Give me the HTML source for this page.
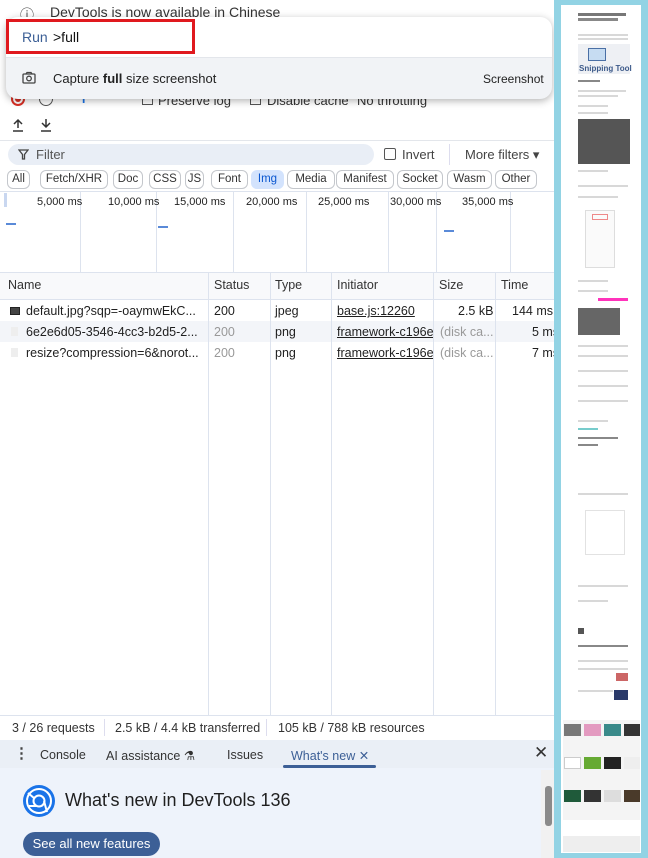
<!DOCTYPE html>
<html><head><meta charset="utf-8"><style>
*{box-sizing:border-box;margin:0;padding:0}
body{width:648px;height:858px;overflow:hidden;background:#fff;font-family:"Liberation Sans","Noto Sans CJK TC",sans-serif;font-size:12px;color:#1f1f1f;position:relative}
.a{position:absolute}
.chip{position:absolute;top:170px;height:19px;border:1px solid #c4c7cc;border-radius:6px;font-size:11.5px;line-height:17px;text-align:center;color:#333}
.vl{position:absolute;width:1px;background:#dde3ee}
.hd{position:absolute;top:278px;font-size:12.5px;color:#333}
.c{position:absolute;font-size:12.5px;white-space:nowrap}
.g{background:#d8d8d8;position:absolute;height:2px}
</style></head><body>
<div class="a" style="left:20px;top:5px;font-size:14px;color:#444">ⓘ</div>
<div class="a" style="left:50px;top:4px;font-size:14px;color:#333">DevTools is now available in Chinese</div>
<div class="a" style="left:11px;top:92px;width:14px;height:14px;border:2px solid #d93025;border-radius:50%"><div style="margin:2px;width:6px;height:6px;background:#d93025;border-radius:50%"></div></div>
<div class="a" style="left:39px;top:92px;width:14px;height:14px;border:1.5px solid #555;border-radius:50%"></div>
<div class="a" style="left:80px;top:92px;color:#1a73e8;font-weight:bold">T</div>
<div class="a" style="left:142px;top:94px;width:11px;height:11px;border:1px solid #555"></div>
<div class="a" style="left:158px;top:93px;font-size:13px;color:#333">Preserve log</div>
<div class="a" style="left:250px;top:94px;width:11px;height:11px;border:1px solid #555"></div>
<div class="a" style="left:267px;top:93px;font-size:13px;color:#333">Disable cache</div>
<div class="a" style="left:357px;top:93px;font-size:13px;color:#333">No throttling</div>
<svg class="a" style="left:12px;top:118px" width="12" height="14" viewBox="0 0 12 14"><path d="M6 10V2M2 6L6 2L10 6M1 13H11" fill="none" stroke="#333" stroke-width="1.5"/></svg>
<svg class="a" style="left:40px;top:118px" width="12" height="14" viewBox="0 0 12 14"><path d="M6 1V9M2 5L6 9L10 5M1 13H11" fill="none" stroke="#333" stroke-width="1.5"/></svg>
<div class="a" style="left:0;top:140px;width:554px;height:1px;background:#e3e6eb"></div>
<div class="a" style="left:8px;top:144px;width:366px;height:21px;background:#e9eef6;border-radius:11px"></div>
<svg class="a" style="left:18px;top:149px" width="11" height="11" viewBox="0 0 11 11"><path d="M1 1H10L6.5 5.5V10H4.5V5.5Z" fill="none" stroke="#444" stroke-width="1.3"/></svg>
<div class="a" style="left:36px;top:147px;font-size:13px;color:#555">Filter</div>
<div class="a" style="left:384px;top:148px;width:12px;height:12px;border:1px solid #555;border-radius:2px"></div>
<div class="a" style="left:402px;top:147px;font-size:13px;color:#444">Invert</div>
<div class="a" style="left:449px;top:144px;width:1px;height:21px;background:#dde"></div>
<div class="a" style="left:465px;top:147px;font-size:13px;color:#444">More filters ▾</div>
<div class="chip" style="left:7px;width:23px">All</div>
<div class="chip" style="left:40px;width:68px">Fetch/XHR</div>
<div class="chip" style="left:113px;width:30px">Doc</div>
<div class="chip" style="left:149px;width:32px">CSS</div>
<div class="chip" style="left:185px;width:19px">JS</div>
<div class="chip" style="left:211px;width:37px">Font</div>
<div class="chip" style="left:251px;width:33px;background:#d3e3fd;border-color:#d3e3fd;color:#0b57d0">Img</div>
<div class="chip" style="left:287px;width:48px">Media</div>
<div class="chip" style="left:336px;width:58px">Manifest</div>
<div class="chip" style="left:397px;width:46px">Socket</div>
<div class="chip" style="left:447px;width:45px">Wasm</div>
<div class="chip" style="left:495px;width:42px">Other</div>
<div class="a" style="left:0;top:191px;width:554px;height:1px;background:#dde3ee"></div>
<div class="a" style="left:4px;top:193px;width:3px;height:14px;background:#c9d7f0"></div>
<div class="vl" style="left:80px;top:191px;height:81px"></div>
<div class="vl" style="left:156px;top:191px;height:81px"></div>
<div class="vl" style="left:233px;top:191px;height:81px"></div>
<div class="vl" style="left:306px;top:191px;height:81px"></div>
<div class="vl" style="left:388px;top:191px;height:81px"></div>
<div class="vl" style="left:436px;top:191px;height:81px"></div>
<div class="vl" style="left:510px;top:191px;height:81px"></div>
<div class="a" style="left:37px;top:196px;font-size:11px">5,000 ms</div>
<div class="a" style="left:108px;top:196px;font-size:11px">10,000 ms</div>
<div class="a" style="left:174px;top:196px;font-size:11px">15,000 ms</div>
<div class="a" style="left:246px;top:196px;font-size:11px">20,000 ms</div>
<div class="a" style="left:318px;top:196px;font-size:11px">25,000 ms</div>
<div class="a" style="left:390px;top:196px;font-size:11px">30,000 ms</div>
<div class="a" style="left:462px;top:196px;font-size:11px">35,000 ms</div>
<div class="a" style="left:6px;top:223px;width:10px;height:2px;background:#5a8ad8"></div>
<div class="a" style="left:158px;top:226px;width:10px;height:2px;background:#5a8ad8"></div>
<div class="a" style="left:444px;top:230px;width:10px;height:2px;background:#5a8ad8"></div>
<div class="a" style="left:0;top:272px;width:554px;height:28px;background:#f8f9fb;border-top:1px solid #dde3ee;border-bottom:1px solid #dde3ee"></div>
<div class="a" style="left:0;top:321px;width:554px;height:21px;background:#f3f5f9"></div>
<div class="vl" style="left:208px;top:272px;height:444px"></div>
<div class="vl" style="left:270px;top:272px;height:444px"></div>
<div class="vl" style="left:331px;top:272px;height:444px"></div>
<div class="vl" style="left:433px;top:272px;height:444px"></div>
<div class="vl" style="left:495px;top:272px;height:444px"></div>
<div class="hd" style="left:8px">Name</div><div class="hd" style="left:214px">Status</div><div class="hd" style="left:275px">Type</div><div class="hd" style="left:337px">Initiator</div><div class="hd" style="left:439px">Size</div><div class="hd" style="left:501px">Time</div>
<div class="a" style="left:10px;top:307px;width:10px;height:8px;background:#444;border:1px solid #222"></div>
<div class="c" style="left:26px;top:304px">default.jpg?sqp=-oaymwEkC...</div>
<div class="c" style="left:214px;top:304px">200</div><div class="c" style="left:275px;top:304px">jpeg</div>
<div class="c" style="left:337px;top:304px;text-decoration:underline">base.js:12260</div>
<div class="c" style="left:458px;top:304px">2.5 kB</div><div class="c" style="left:512px;top:304px">144 ms</div>
<div class="a" style="left:11px;top:327px;width:7px;height:9px;background:#eee"></div>
<div class="c" style="left:26px;top:325px">6e2e6d05-3546-4cc3-b2d5-2...</div>
<div class="c" style="left:214px;top:325px;color:#999">200</div><div class="c" style="left:275px;top:325px">png</div>
<div class="c" style="left:337px;top:325px;text-decoration:underline;width:96px;overflow:hidden">framework-c196e</div>
<div class="c" style="left:440px;top:325px;color:#999">(disk ca...</div><div class="c" style="left:532px;top:325px">5 ms</div>
<div class="a" style="left:11px;top:348px;width:7px;height:9px;background:#eee"></div>
<div class="c" style="left:26px;top:346px">resize?compression=6&amp;norot...</div>
<div class="c" style="left:214px;top:346px;color:#999">200</div><div class="c" style="left:275px;top:346px">png</div>
<div class="c" style="left:337px;top:346px;text-decoration:underline;width:96px;overflow:hidden">framework-c196e</div>
<div class="c" style="left:440px;top:346px;color:#999">(disk ca...</div><div class="c" style="left:532px;top:346px">7 ms</div>
<div class="a" style="left:0;top:715px;width:554px;height:1px;background:#dde3ee"></div>
<div class="a" style="left:0;top:716px;width:554px;height:24px;background:#fff"></div>
<div class="c" style="left:12px;top:721px;color:#333">3 / 26 requests</div>
<div class="a" style="left:104px;top:719px;width:1px;height:17px;background:#dde"></div>
<div class="c" style="left:115px;top:721px;color:#333">2.5 kB / 4.4 kB transferred</div>
<div class="a" style="left:266px;top:719px;width:1px;height:17px;background:#dde"></div>
<div class="c" style="left:278px;top:721px;color:#333">105 kB / 788 kB resources</div>
<div class="a" style="left:0;top:740px;width:554px;height:28px;background:#eaeff6"></div>
<div class="a" style="left:14px;top:744px;font-size:15px;color:#444;font-weight:bold">⋮</div>
<div class="c" style="left:40px;top:748px;color:#333">Console</div>
<div class="c" style="left:106px;top:748px;color:#333">AI assistance ⚗</div>
<div class="c" style="left:227px;top:748px;color:#333">Issues</div>
<div class="c" style="left:291px;top:748px;color:#3c5f96">What's new ✕</div>
<div class="a" style="left:283px;top:765px;width:93px;height:3px;background:#3c5f96;border-radius:2px"></div>
<div class="a" style="left:534px;top:743px;font-size:17px;color:#333">✕</div>
<div class="a" style="left:0;top:768px;width:554px;height:90px;background:#eef3fb"></div>
<div class="a" style="left:541px;top:770px;width:13px;height:88px;background:#f1f1f1"></div>
<div class="a" style="left:545px;top:786px;width:7px;height:40px;background:#8a8a8a;border-radius:3px"></div>
<svg class="a" style="left:22px;top:784px" width="34" height="34" viewBox="0 0 34 34"><circle cx="17" cy="17" r="16" fill="#1a73e8"/><circle cx="17" cy="17" r="12" fill="none" stroke="#fff" stroke-width="2"/><circle cx="17" cy="17" r="5.5" fill="none" stroke="#fff" stroke-width="2"/><path d="M12 14 L6 9 M22 17 L25 28 M15 22 L7 22" stroke="#fff" stroke-width="2"/></svg>
<div class="a" style="left:65px;top:790px;font-size:18px;color:#1f1f1f">What's new in DevTools 136</div>
<div class="a" style="left:23px;top:832px;width:137px;height:24px;background:#3c5f96;border-radius:12px;color:#fff;font-size:13px;line-height:24px;text-align:center">See all new features</div>
<div class="a" style="left:6px;top:17px;width:546px;height:82px;background:#f1f3f6;border-radius:12px;box-shadow:0 2px 8px rgba(0,0,0,.3);overflow:hidden">
 <div style="height:41px;background:#fff;border-bottom:1px solid #e3e6eb"></div>
</div>
<div class="a" style="left:6px;top:19px;width:189px;height:35px;border:3px solid #e0191e"></div>
<div class="a" style="left:22px;top:29px;font-size:14px;color:#3c5f96">Run</div>
<div class="a" style="left:53px;top:29px;font-size:14px;color:#111">&gt;full</div>
<svg class="a" style="left:22px;top:71px" width="14" height="14" viewBox="0 0 14 14"><rect x="1" y="3" width="12" height="9" rx="1" fill="none" stroke="#444" stroke-width="1.3"/><circle cx="7" cy="7.5" r="2.3" fill="none" stroke="#444" stroke-width="1.3"/><path d="M4 3 L5 1.5 H9 L10 3" fill="none" stroke="#444" stroke-width="1.3"/></svg>
<div class="a" style="left:53px;top:71px;font-size:13px;color:#222">Capture <b>full</b> size screenshot</div>
<div class="a" style="left:483px;top:72px;font-size:12px;color:#222">Screenshot</div>
<div class="a" style="left:554px;top:0;width:94px;height:858px;background:#92d3e4"></div>
<div class="a" style="left:561px;top:5px;width:80px;height:848px;background:#fff"></div>
<div class="a" style="left:578px;top:13px;width:48px;height:3px;background:#777"></div>
<div class="a" style="left:578px;top:18px;width:40px;height:3px;background:#888"></div>
<div class="g" style="left:578px;top:34px;width:50px"></div>
<div class="g" style="left:578px;top:38px;width:50px"></div>
<div class="a" style="left:578px;top:44px;width:52px;height:30px;background:#eef0f4"></div>
<div class="a" style="left:588px;top:48px;width:18px;height:13px;background:#c6dcf2;border:1px solid #4a6fa5"></div>
<div class="a" style="left:579px;top:64px;font-size:8px;font-weight:bold;color:#3d5a8a">Snipping Tool</div>
<div class="g" style="left:578px;top:80px;width:22px;background:#888"></div>
<div class="g" style="left:578px;top:90px;width:48px"></div>
<div class="g" style="left:578px;top:95px;width:40px"></div>
<div class="g" style="left:578px;top:105px;width:30px"></div>
<div class="g" style="left:578px;top:112px;width:30px"></div>
<div class="a" style="left:578px;top:119px;width:52px;height:45px;background:#555"></div>
<div class="g" style="left:578px;top:170px;width:30px"></div>
<div class="g" style="left:578px;top:185px;width:50px"></div>
<div class="g" style="left:578px;top:196px;width:40px"></div>
<div class="a" style="left:585px;top:210px;width:30px;height:58px;border:1px solid #ddd;background:#fafafa"></div>
<div class="a" style="left:592px;top:214px;width:16px;height:6px;border:1px solid #e88"></div>
<div class="g" style="left:578px;top:280px;width:30px"></div>
<div class="g" style="left:578px;top:290px;width:30px"></div>
<div class="a" style="left:598px;top:298px;width:30px;height:3px;background:#f3b"></div>
<div class="a" style="left:578px;top:308px;width:42px;height:27px;background:#666"></div>
<div class="g" style="left:578px;top:345px;width:50px"></div>
<div class="g" style="left:578px;top:355px;width:50px"></div>
<div class="g" style="left:578px;top:370px;width:50px"></div>
<div class="g" style="left:578px;top:385px;width:50px"></div>
<div class="g" style="left:578px;top:400px;width:50px"></div>
<div class="g" style="left:578px;top:420px;width:30px"></div>
<div class="g" style="left:578px;top:428px;width:20px;background:#7cc"></div>
<div class="g" style="left:578px;top:437px;width:40px;background:#888"></div>
<div class="g" style="left:578px;top:444px;width:20px;background:#888"></div>
<div class="g" style="left:578px;top:493px;width:50px"></div>
<div class="a" style="left:585px;top:510px;width:40px;height:45px;border:1px solid #e2e2e2"></div>
<div class="g" style="left:578px;top:585px;width:50px"></div>
<div class="g" style="left:578px;top:600px;width:30px"></div>
<div class="a" style="left:578px;top:628px;width:6px;height:6px;background:#555"></div>
<div class="g" style="left:578px;top:645px;width:50px;background:#888"></div>
<div class="g" style="left:578px;top:660px;width:50px"></div>
<div class="g" style="left:578px;top:668px;width:50px"></div>
<div class="a" style="left:616px;top:673px;width:12px;height:8px;background:#c66"></div>
<div class="g" style="left:578px;top:690px;width:35px"></div>
<div class="a" style="left:614px;top:690px;width:14px;height:10px;background:#2a3a6a"></div>
<div class="a" style="left:563px;top:720px;width:77px;height:100px;background:#f4f4f4"></div>
<div class="a" style="left:564px;top:724px;width:17px;height:12px;background:#777"></div>
<div class="a" style="left:584px;top:724px;width:17px;height:12px;background:#e39ac0"></div>
<div class="a" style="left:604px;top:724px;width:17px;height:12px;background:#3a8a8a"></div>
<div class="a" style="left:624px;top:724px;width:16px;height:12px;background:#333"></div>
<div class="a" style="left:564px;top:757px;width:17px;height:12px;background:#fff;border:1px solid #ccc"></div>
<div class="a" style="left:584px;top:757px;width:17px;height:12px;background:#6a3"></div>
<div class="a" style="left:604px;top:757px;width:17px;height:12px;background:#222"></div>
<div class="a" style="left:624px;top:757px;width:16px;height:12px;background:#eee"></div>
<div class="a" style="left:564px;top:790px;width:17px;height:12px;background:#1f5a3a"></div>
<div class="a" style="left:584px;top:790px;width:17px;height:12px;background:#333"></div>
<div class="a" style="left:604px;top:790px;width:17px;height:12px;background:#ddd"></div>
<div class="a" style="left:624px;top:790px;width:16px;height:12px;background:#4a3a2a"></div>
<div class="a" style="left:563px;top:836px;width:77px;height:16px;background:#eee"></div>
</body></html>
